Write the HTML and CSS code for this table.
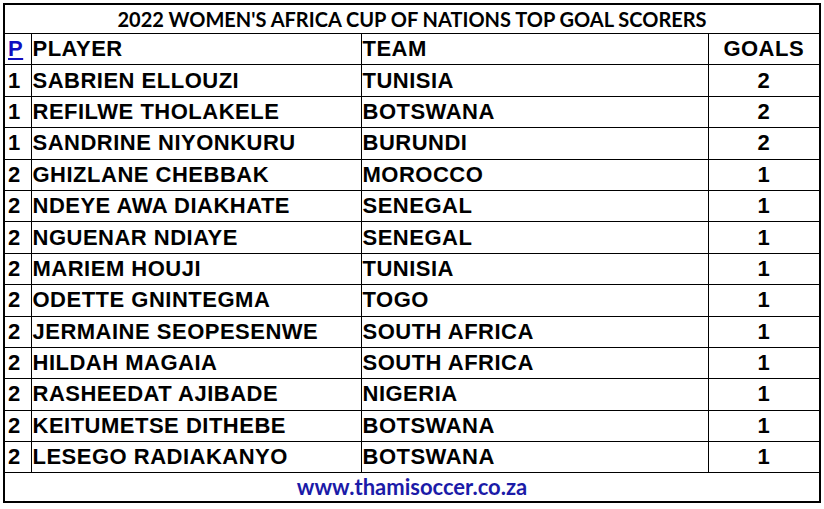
FILE: index.html
```html
<!DOCTYPE html>
<html>
<head>
<meta charset="utf-8">
<link rel="stylesheet" href="styles.css">
</head>
<body>
<table class="scorers">
  <colgroup>
    <col class="c-pos"><col class="c-player"><col class="c-team"><col class="c-goals">
  </colgroup>
  <tr class="title-row"><td colspan="4" class="title">2022 WOMEN'S AFRICA CUP OF NATIONS TOP GOAL SCORERS</td></tr>
  <tr class="row head"><td class="pos"><a class="plink" href="#">P</a></td><td>PLAYER</td><td>TEAM</td><td class="goals">GOALS</td></tr>
  <tr class="row"><td class="pos">1</td><td>SABRIEN ELLOUZI</td><td>TUNISIA</td><td class="goals">2</td></tr>
  <tr class="row"><td class="pos">1</td><td>REFILWE THOLAKELE</td><td>BOTSWANA</td><td class="goals">2</td></tr>
  <tr class="row"><td class="pos">1</td><td>SANDRINE NIYONKURU</td><td>BURUNDI</td><td class="goals">2</td></tr>
  <tr class="row"><td class="pos">2</td><td>GHIZLANE CHEBBAK</td><td>MOROCCO</td><td class="goals">1</td></tr>
  <tr class="row"><td class="pos">2</td><td>NDEYE AWA DIAKHATE</td><td>SENEGAL</td><td class="goals">1</td></tr>
  <tr class="row"><td class="pos">2</td><td>NGUENAR NDIAYE</td><td>SENEGAL</td><td class="goals">1</td></tr>
  <tr class="row"><td class="pos">2</td><td>MARIEM HOUJI</td><td>TUNISIA</td><td class="goals">1</td></tr>
  <tr class="row"><td class="pos">2</td><td>ODETTE GNINTEGMA</td><td>TOGO</td><td class="goals">1</td></tr>
  <tr class="row"><td class="pos">2</td><td>JERMAINE SEOPESENWE</td><td>SOUTH AFRICA</td><td class="goals">1</td></tr>
  <tr class="row"><td class="pos">2</td><td>HILDAH MAGAIA</td><td>SOUTH AFRICA</td><td class="goals">1</td></tr>
  <tr class="row"><td class="pos">2</td><td>RASHEEDAT AJIBADE</td><td>NIGERIA</td><td class="goals">1</td></tr>
  <tr class="row"><td class="pos">2</td><td>KEITUMETSE DITHEBE</td><td>BOTSWANA</td><td class="goals">1</td></tr>
  <tr class="row"><td class="pos">2</td><td>LESEGO RADIAKANYO</td><td>BOTSWANA</td><td class="goals">1</td></tr>
  <tr class="foot-row"><td colspan="4" class="foot">www.thamisoccer.co.za</td></tr>
</table>
</body>
</html>
```

FILE: styles.css
```css
html, body {
  margin: 0;
  padding: 0;
  background: #ffffff;
}
body {
  padding: 3px 0 0 3px;
}
.scorers {
  border-collapse: collapse;
  table-layout: fixed;
  width: 816px;
  border: 2px solid #000;
  font-family: "Liberation Sans", Arial, sans-serif;
  font-weight: bold;
  color: #000;
}
.c-pos { width: 27px; }
.c-player { width: 330px; }
.c-team { width: 347px; }
.c-goals { width: 112px; }
.scorers td {
  border: 1px solid #000;
  padding: 0 0 0 1px;
  font-size: 22px;
  letter-spacing: 0.5px;
  line-height: 24px;
  white-space: nowrap;
  overflow: hidden;
}
.title-row td {
  height: 28px;
}
.row td {
  height: 30.4px;
}
.title {
  font-family: Lato, "Open Sans", sans-serif;
  font-size: 20px !important;
  letter-spacing: 0 !important;
  text-align: center;
  padding: 0 !important;
}
.foot-row td {
  height: 28px;
}
.foot {
  font-family: Lato, "Open Sans", sans-serif;
  font-size: 22px !important;
  letter-spacing: 0 !important;
  color: #1b1ba8;
  text-align: center;
  padding: 0 !important;
}
.pos {
  padding-left: 3px !important;
}
.goals {
  text-align: center;
  padding: 0 !important;
}
.plink {
  color: #1010c0;
  text-decoration: underline;
}
```
